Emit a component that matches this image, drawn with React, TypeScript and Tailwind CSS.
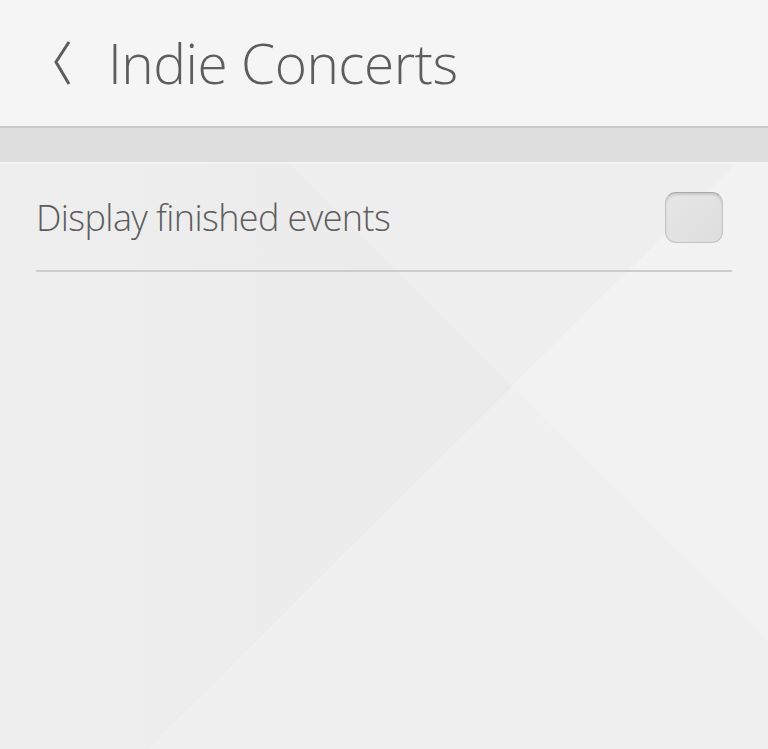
import React, { useState } from 'react';

const font = { fontFamily: '"Open Sans", "Liberation Sans", sans-serif' };

function Backdrop() {
  return (
    <svg
      className="absolute inset-0 h-full w-full"
      viewBox="0 0 768 587"
      preserveAspectRatio="none"
      aria-hidden="true"
    >
      <defs>
        <linearGradient id="leftShade" x1="0" y1="0" x2="1" y2="0">
          <stop offset="0" stopColor="#eeeeee" />
          <stop offset="1" stopColor="#e9e9e9" />
        </linearGradient>
      </defs>
      <rect x="0" y="0" width="768" height="587" fill="url(#leftShade)" />
      <polygon points="289,0 735,0 512,223" fill="#eeeeee" />
      <polygon points="735,0 768,0 768,587 148,587" fill="#f0f0f0" />
      <polygon points="512,223 735,0 768,0 768,479" fill="#f2f2f2" />
    </svg>
  );
}

export default function App() {
  const [showFinished, setShowFinished] = useState(false);

  return (
    <div className="flex h-[749px] w-full flex-col overflow-hidden bg-[#ececec] text-[#5d5d5d]" style={font}>
      <header className="flex h-[128px] shrink-0 items-center border-b-2 border-[#cacaca] bg-[#f5f5f5]">
        <button className="ml-[54px] flex h-[44px] w-[18px] items-center" aria-label="Back">
          <svg width="18" height="44" viewBox="0 0 18 44" fill="none">
            <path d="M15 1 L2 21 L15 43" stroke="#5d5d5d" strokeWidth="3" />
          </svg>
        </button>
        <h1 className="ml-[36px] mt-[-2px] text-[55px] font-light leading-none tracking-[-0.5px]">Indie Concerts</h1>
      </header>

      <div className="h-[34px] shrink-0 bg-[#dedede]" />

      <main className="relative flex-1 border-t-2 border-[#f4f4f4]">
        <Backdrop />
        <div className="relative px-[36px]">
          <label className="flex h-[108px] items-center justify-between border-b-2 border-[#cdcdcd]">
            <span className="mt-[1px] text-[36px] font-light leading-none tracking-[-0.6px]">Display finished events</span>
            <button
              onClick={() => setShowFinished(!showFinished)}
              className="mr-[9px] h-[51px] w-[58px] rounded-[11px] border border-[#c4c4c4] border-t-[#a9a9a9] bg-gradient-to-br from-[#e6e6e6] to-[#dedede] shadow-[inset_0_2px_2px_rgba(0,0,0,0.12)]"
              aria-pressed={showFinished}
            />
          </label>
        </div>
      </main>
    </div>
  );
}
